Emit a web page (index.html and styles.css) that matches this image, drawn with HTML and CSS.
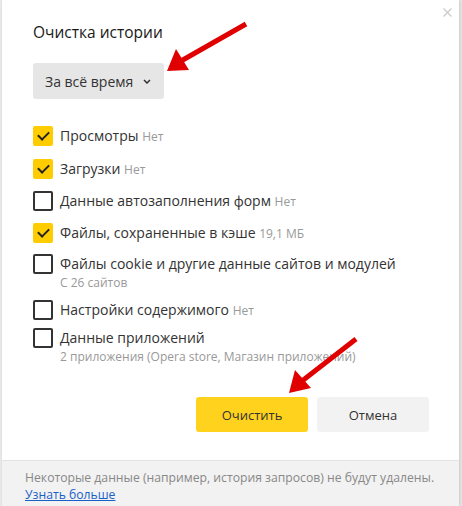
FILE: index.html
```html
<!DOCTYPE html>
<html lang="ru">
<head>
    <meta charset="UTF-8">
    <meta name="viewport" content="width=device-width, initial-scale=1.0">
    <title>Очистка истории</title>
    <link rel="stylesheet" href="styles.css">
</head>
<body>
    <div class="dialog">
        <div class="dialog-body">
            <button class="close" aria-label="Закрыть">
                <svg width="9" height="9" viewBox="0 0 9 9"><path d="M0.5 0.5L8.5 8.5M8.5 0.5L0.5 8.5" stroke="#c8c8c8" stroke-width="1.1" fill="none"/></svg>
            </button>
            <h1 class="title">Очистка истории</h1>
            <div class="select">
                <span>За всё время</span>
                <svg width="8" height="5" viewBox="0 0 8 5"><path d="M1 1L4 4L7 1" stroke="#333" stroke-width="1.5" fill="none"/></svg>
            </div>
            <ul class="options">
                <li class="option">
                    <span class="box checked"></span>
                    <div class="text"><span class="name">Просмотры</span> <span class="note">Нет</span></div>
                </li>
                <li class="option">
                    <span class="box checked"></span>
                    <div class="text"><span class="name">Загрузки</span> <span class="note">Нет</span></div>
                </li>
                <li class="option">
                    <span class="box"></span>
                    <div class="text"><span class="name">Данные автозаполнения форм</span> <span class="note">Нет</span></div>
                </li>
                <li class="option">
                    <span class="box checked"></span>
                    <div class="text"><span class="name">Файлы, сохраненные в кэше</span> <span class="note">19,1 МБ</span></div>
                </li>
                <li class="option">
                    <span class="box"></span>
                    <div class="text">
                        <span class="name">Файлы cookie и другие данные сайтов и модулей</span>
                        <div class="sub">С 26 сайтов</div>
                    </div>
                </li>
                <li class="option tight">
                    <span class="box"></span>
                    <div class="text"><span class="name">Настройки содержимого</span> <span class="note">Нет</span></div>
                </li>
                <li class="option tight">
                    <span class="box"></span>
                    <div class="text">
                        <span class="name">Данные приложений</span>
                        <div class="sub">2 приложения (Opera store, Магазин приложений)</div>
                    </div>
                </li>
            </ul>
            <div class="actions">
                <button class="btn btn-primary">Очистить</button>
                <button class="btn">Отмена</button>
            </div>
        </div>
        <div class="dialog-footer">
            <p>Некоторые данные (например, история запросов) не будут удалены.</p>
            <a href="#">Узнать больше</a>
        </div>
    </div>

    <svg class="arrows" width="462" height="506" viewBox="0 0 462 506">
        <g stroke="#e00000" stroke-width="5" fill="#e00000">
            <line x1="246" y1="24" x2="181" y2="61"/>
            <line x1="356" y1="339" x2="302" y2="381"/>
        </g>
        <g fill="#e00000">
            <polygon points="167,71 176,49 189,70"/>
            <polygon points="289,393 295,370 311,388"/>
        </g>
    </svg>
</body>
</html>
```

FILE: styles.css
```css
* {
    margin: 0;
    padding: 0;
    box-sizing: border-box;
}

body {
    width: 462px;
    height: 506px;
    overflow: hidden;
    background: #e9e9e9;
    font-family: "Open Sans", "Noto Sans", sans-serif;
    color: #333;
    position: relative;
}

.dialog {
    margin-left: 2px;
    width: 457px;
    height: 506px;
    background: #fff;
    display: flex;
    flex-direction: column;
    box-shadow: 1px 0 3px rgba(0, 0, 0, 0.15);
}

.dialog-body {
    position: relative;
    flex: 1;
    padding: 22px 30px 0 31px;
}

.close {
    position: absolute;
    top: 8px;
    right: 7px;
    border: none;
    background: none;
    width: 9px;
    height: 9px;
    display: flex;
}

.title {
    font-size: 15.5px;
    font-weight: normal;
    line-height: 20px;
    color: #1a1a1a;
}

.select {
    margin-top: 21px;
    width: 131px;
    height: 36px;
    background: #e6e6e6;
    border-radius: 3px;
    display: flex;
    align-items: center;
    gap: 10px;
    padding-left: 12px;
    font-size: 14px;
}

.options {
    list-style: none;
    margin-top: 27px;
    display: flex;
    flex-direction: column;
}

.option {
    display: flex;
    align-items: flex-start;
    gap: 7px;
    margin-top: 12px;
}

.option:first-child {
    margin-top: 0;
}

.option:nth-child(2) {
    margin-top: 13px;
}

.option:nth-child(5) {
    margin-top: 11px;
}

.option.tight {
    margin-top: 8px;
}

.box {
    flex: none;
    width: 20px;
    height: 20px;
    border: 2px solid #333;
    border-radius: 2px;
    position: relative;
}

.box.checked {
    border: none;
    background: #ffcc00;
}

.box.checked::after {
    content: "";
    position: absolute;
    left: 7px;
    top: 3px;
    width: 5px;
    height: 9px;
    border: solid #222;
    border-width: 0 2px 2px 0;
    transform: rotate(45deg);
}

.text {
    font-size: 14px;
    line-height: 20px;
}

.note {
    font-size: 12px;
    line-height: 1;
    color: #999;
}

.sub {
    font-size: 12px;
    line-height: 18px;
    color: #999;
}

.actions {
    margin-top: 31px;
    display: flex;
    justify-content: flex-end;
    gap: 9px;
}

.btn {
    width: 112px;
    height: 35px;
    border: none;
    border-radius: 3px;
    background: #f2f2f2;
    font-family: inherit;
    font-size: 13px;
    color: #333;
}

.btn-primary {
    background: #ffd21e;
}

.dialog-footer {
    height: 46px;
    background: #f2f2f2;
    border-top: 1px solid #e3e3e3;
    padding: 8px 0 0 23px;
    font-size: 12.2px;
    line-height: 17px;
    color: #888;
}

.dialog-footer a {
    color: #1a5fc8;
}

.arrows {
    position: absolute;
    left: 0;
    top: 0;
    pointer-events: none;
}
```
